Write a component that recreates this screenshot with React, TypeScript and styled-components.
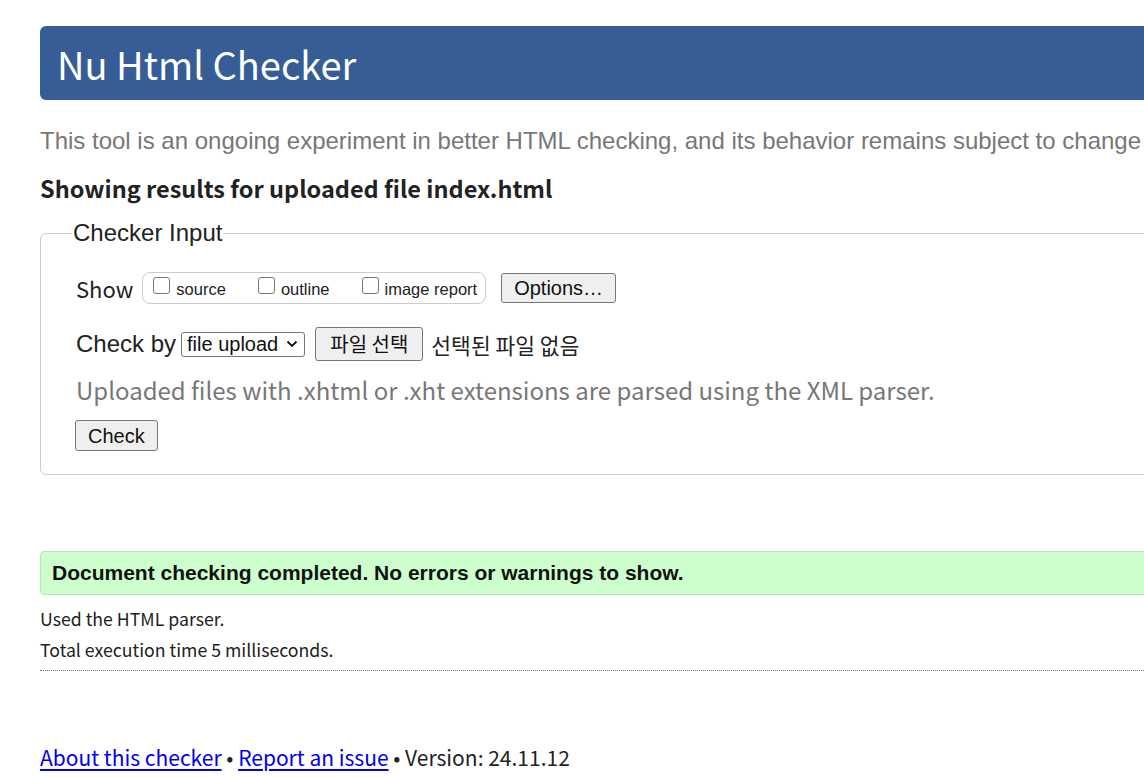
import React from "react";
import styled, { createGlobalStyle } from "styled-components";

const GlobalStyle = createGlobalStyle`
  html, body {
    margin: 0;
    padding: 0;
    background: #fff;
    overflow: hidden;
  }
  body {
    font-family: "Noto Sans CJK KR", "Noto Sans", sans-serif;
    color: #222;
  }
`;

const KR = `"Noto Sans CJK KR", "Noto Sans", sans-serif`;
const ARIAL = `"Liberation Sans", Arial, sans-serif`;

const Page = styled.div`
  width: 1260px;
  padding: 26px 0 0 40px;
`;

const Header = styled.h1`
  margin: 0;
  height: 74px;
  padding-left: 17px;
  background: #365d95;
  border-radius: 6px;
  color: #fff;
  font-family: ${KR};
  font-weight: 400;
  font-size: 38px;
  line-height: 76px;
`;

const Intro = styled.p`
  margin: 26px 0 0;
  font-family: ${ARIAL};
  font-size: 24px;
  line-height: 30px;
  color: #777;
  white-space: nowrap;
`;

const ResultTitle = styled.h2`
  margin: 17px 0 0;
  font-family: ${KR};
  font-weight: 700;
  font-size: 23.5px;
  line-height: 30px;
  color: #222;
`;

const Fieldset = styled.fieldset`
  margin: 15px 0 0;
  padding: 16px 0 23px 35px;
  border: 1px solid #ccc;
  border-radius: 6px;
  min-width: 0;
`;

const Legend = styled.legend`
  margin-left: -4px;
  padding: 0 1px;
  font-family: ${ARIAL};
  font-size: 24px;
  line-height: 30px;
  color: #222;
`;

const Row = styled.div<{ $gap?: number; $mt?: number }>`
  display: flex;
  align-items: center;
  gap: ${(p) => p.$gap ?? 9}px;
  margin-top: ${(p) => p.$mt ?? 0}px;
`;

const RowLabel = styled.span<{ $arial?: boolean }>`
  font-family: ${(p) => (p.$arial ? ARIAL : KR)};
  font-size: ${(p) => (p.$arial ? 24 : 22)}px;
  line-height: 30px;
  color: #222;
`;

const CheckGroup = styled.div`
  display: flex;
  align-items: center;
  height: 30px;
  padding: 0 8px 0 10px;
  border: 1px solid #ccc;
  border-radius: 8px;
  gap: 32px;
`;

const CheckItem = styled.label`
  display: flex;
  align-items: center;
  gap: 6px;
  font-family: ${ARIAL};
  font-size: 16.5px;
  color: #222;
  position: relative;
  top: 1px;
`;

const Box = styled.span`
  display: inline-block;
  width: 15px;
  height: 15px;
  border: 1px solid #767676;
  border-radius: 3px;
  background: #fff;
  position: relative;
  top: -4px;
`;

const Button = styled.button<{ $kr?: boolean; $h?: number; $px?: number }>`
  height: ${(p) => p.$h ?? 31}px;
  padding: 0 ${(p) => p.$px ?? 12}px;
  background: #efefef;
  border: 1px solid #767676;
  border-radius: 3px;
  font-family: ${(p) => (p.$kr ? KR : ARIAL)};
  font-size: 20px;
  color: #111;
  line-height: 1;
`;

const Select = styled.div`
  display: flex;
  align-items: center;
  gap: 8px;
  height: 25px;
  box-sizing: border-box;
  padding: 0 6px 0 5px;
  border: 1px solid #767676;
  border-radius: 3px;
  font-family: ${ARIAL};
  font-size: 20px;
  color: #111;
`;

const NoFile = styled.span`
  font-family: ${KR};
  font-size: 21.5px;
  color: #222;
  margin-left: 3px;
`;

const Note = styled.p`
  margin: 14px 0 0;
  font-family: ${KR};
  font-size: 24px;
  line-height: 30px;
  color: #777;
  white-space: nowrap;
`;

const Success = styled.div`
  margin-top: 76px;
  height: 44px;
  box-sizing: border-box;
  padding-left: 11px;
  display: flex;
  align-items: center;
  background: #ccffcc;
  border: 1px solid #c2dcc2;
  border-radius: 4px;
  font-family: ${ARIAL};
  font-weight: 700;
  font-size: 21px;
  color: #111;
`;

const Detail = styled.p<{ $mt: number }>`
  margin: ${(p) => p.$mt}px 0 0;
  font-family: ${KR};
  font-size: 17.7px;
  line-height: 24px;
  color: #222;
`;

const Rule = styled.hr`
  margin: 9px 0 0;
  border: 0;
  border-top: 1px dotted #777;
`;

const Footer = styled.p`
  margin: 72px 0 0;
  font-family: ${KR};
  font-size: 21px;
  line-height: 28px;
  color: #222;
  a {
    color: #0000ee;
    text-decoration: underline;
    text-underline-offset: 3px;
  }
`;

const Chevron = () => (
  <svg width="12" height="8" viewBox="0 0 12 8">
    <path d="M1.5 1.5 L6 6 L10.5 1.5" fill="none" stroke="#111" strokeWidth="1.8" />
  </svg>
);

export default function App() {
  return (
    <>
      <GlobalStyle />
      <Page>
        <Header>Nu Html Checker</Header>
        <Intro>
          This tool is an ongoing experiment in better HTML checking, and its behavior remains subject to change
        </Intro>
        <ResultTitle>Showing results for uploaded file index.html</ResultTitle>
        <Fieldset>
          <Legend>Checker Input</Legend>
          <Row $gap={9} $mt={8}>
            <RowLabel>Show</RowLabel>
            <CheckGroup>
              <CheckItem><Box />source</CheckItem>
              <CheckItem><Box />outline</CheckItem>
              <CheckItem><Box />image report</CheckItem>
            </CheckGroup>
            <Button $px={12} $h={30} style={{ marginLeft: 6 }}>Options…</Button>
          </Row>
          <Row $gap={5} $mt={23}>
            <RowLabel $arial>Check by</RowLabel>
            <Select>
              file upload <Chevron />
            </Select>
            <Button $kr $h={34} $px={14} style={{ marginLeft: 5 }}>파일 선택</Button>
            <NoFile>선택된 파일 없음</NoFile>
          </Row>
          <Note>Uploaded files with .xhtml or .xht extensions are parsed using the XML parser.</Note>
          <Row $mt={15}>
            <Button style={{ marginLeft: -1 }}>Check</Button>
          </Row>
        </Fieldset>
        <Success>Document checking completed. No errors or warnings to show.</Success>
        <Detail $mt={11}>Used the HTML parser.</Detail>
        <Detail $mt={7}>Total execution time 5 milliseconds.</Detail>
        <Rule />
        <Footer>
          <a href="#">About this checker</a> • <a href="#">Report an issue</a> • Version: 24.11.12
        </Footer>
      </Page>
    </>
  );
}
